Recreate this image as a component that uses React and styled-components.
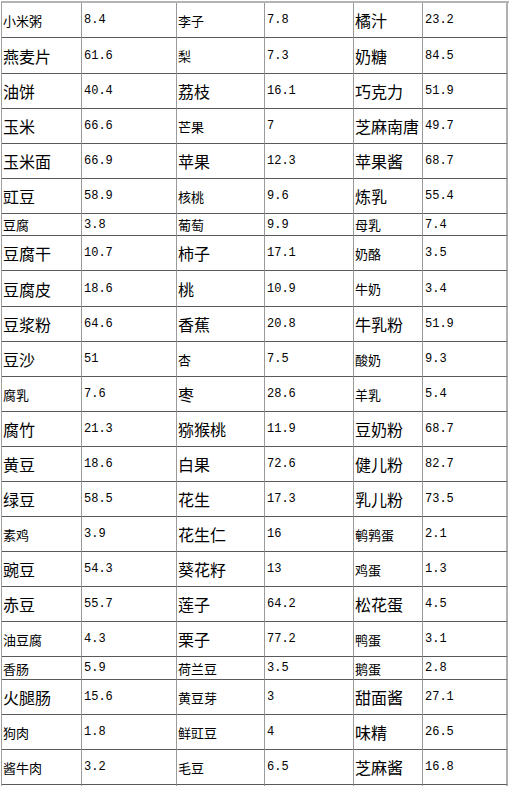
import styled, { createGlobalStyle } from 'styled-components';

const GlobalStyle = createGlobalStyle`
  html, body {
    margin: 0;
    padding: 0;
    background: #fff;
  }
`;

const COLS = '80px 95px 88px 89px 69px 85px';

const Sheet = styled.div`
  margin: 1px 0 0 1px;
  width: 507px;
  border-top: 2px solid #b4b4b4;
  border-left: 1px solid #a0a0a0;
`;

const Row = styled.div`
  display: grid;
  grid-template-columns: ${COLS};
  height: ${(p) => p.$h}px;
`;

const Cell = styled.div`
  display: flex;
  align-items: center;
  padding-left: 1px;
  border-right: 1px solid #9a9a9a;
  border-bottom: 1px solid #5a5a5a;
  overflow: hidden;
  white-space: nowrap;
  color: #000;

  &:last-child {
    border-right: 2px solid #b0b0b0;
  }
`;

const Name = styled(Cell)`
  font-family: 'Noto Sans CJK SC', 'Noto Sans', sans-serif;
  font-size: ${(p) => (p.$big ? 16 : 13)}px;
`;

const Num = styled(Cell)`
  font-family: 'Liberation Mono', monospace;
  font-size: 12px;
  padding-left: 2px;
`;

// [height, [name, big, value] x3]
const rows = [
  [35, ['小米粥', 0, '8.4'], ['李子', 0, '7.8'], ['橘汁', 1, '23.2']],
  [36, ['燕麦片', 1, '61.6'], ['梨', 0, '7.3'], ['奶糖', 1, '84.5']],
  [35, ['油饼', 1, '40.4'], ['荔枝', 1, '16.1'], ['巧克力', 1, '51.9']],
  [35, ['玉米', 1, '66.6'], ['芒果', 0, '7'], ['芝麻南唐', 1, '49.7']],
  [35, ['玉米面', 1, '66.9'], ['苹果', 1, '12.3'], ['苹果酱', 1, '68.7']],
  [35, ['豇豆', 1, '58.9'], ['核桃', 0, '9.6'], ['炼乳', 1, '55.4']],
  [22, ['豆腐', 0, '3.8'], ['葡萄', 0, '9.9'], ['母乳', 0, '7.4']],
  [35, ['豆腐干', 1, '10.7'], ['柿子', 1, '17.1'], ['奶酪', 0, '3.5']],
  [36, ['豆腐皮', 1, '18.6'], ['桃', 1, '10.9'], ['牛奶', 0, '3.4']],
  [35, ['豆浆粉', 1, '64.6'], ['香蕉', 1, '20.8'], ['牛乳粉', 1, '51.9']],
  [35, ['豆沙', 1, '51'], ['杏', 0, '7.5'], ['酸奶', 0, '9.3']],
  [35, ['腐乳', 0, '7.6'], ['枣', 1, '28.6'], ['羊乳', 0, '5.4']],
  [35, ['腐竹', 1, '21.3'], ['猕猴桃', 1, '11.9'], ['豆奶粉', 1, '68.7']],
  [35, ['黄豆', 1, '18.6'], ['白果', 1, '72.6'], ['健儿粉', 1, '82.7']],
  [35, ['绿豆', 1, '58.5'], ['花生', 1, '17.3'], ['乳儿粉', 1, '73.5']],
  [35, ['素鸡', 0, '3.9'], ['花生仁', 1, '16'], ['鹌鹑蛋', 0, '2.1']],
  [35, ['豌豆', 1, '54.3'], ['葵花籽', 1, '13'], ['鸡蛋', 0, '1.3']],
  [35, ['赤豆', 1, '55.7'], ['莲子', 1, '64.2'], ['松花蛋', 1, '4.5']],
  [35, ['油豆腐', 0, '4.3'], ['栗子', 1, '77.2'], ['鸭蛋', 0, '3.1']],
  [23, ['香肠', 0, '5.9'], ['荷兰豆', 0, '3.5'], ['鹅蛋', 0, '2.8']],
  [35, ['火腿肠', 1, '15.6'], ['黄豆芽', 0, '3'], ['甜面酱', 1, '27.1']],
  [35, ['狗肉', 0, '1.8'], ['鲜豇豆', 0, '4'], ['味精', 1, '26.5']],
  [35, ['酱牛肉', 0, '3.2'], ['毛豆', 0, '6.5'], ['芝麻酱', 1, '16.8']],
  [35, ['', 0, ''], ['', 0, ''], ['', 0, '']],
];

export default function App() {
  return (
    <>
      <GlobalStyle />
      <Sheet>
        {rows.map(([h, ...pairs], i) => (
          <Row key={i} $h={h}>
            {pairs.map(([name, big, value], j) => [
              <Name key={`n${j}`} $big={!!big}>{name}</Name>,
              <Num key={`v${j}`}>{value}</Num>,
            ])}
          </Row>
        ))}
      </Sheet>
    </>
  );
}
